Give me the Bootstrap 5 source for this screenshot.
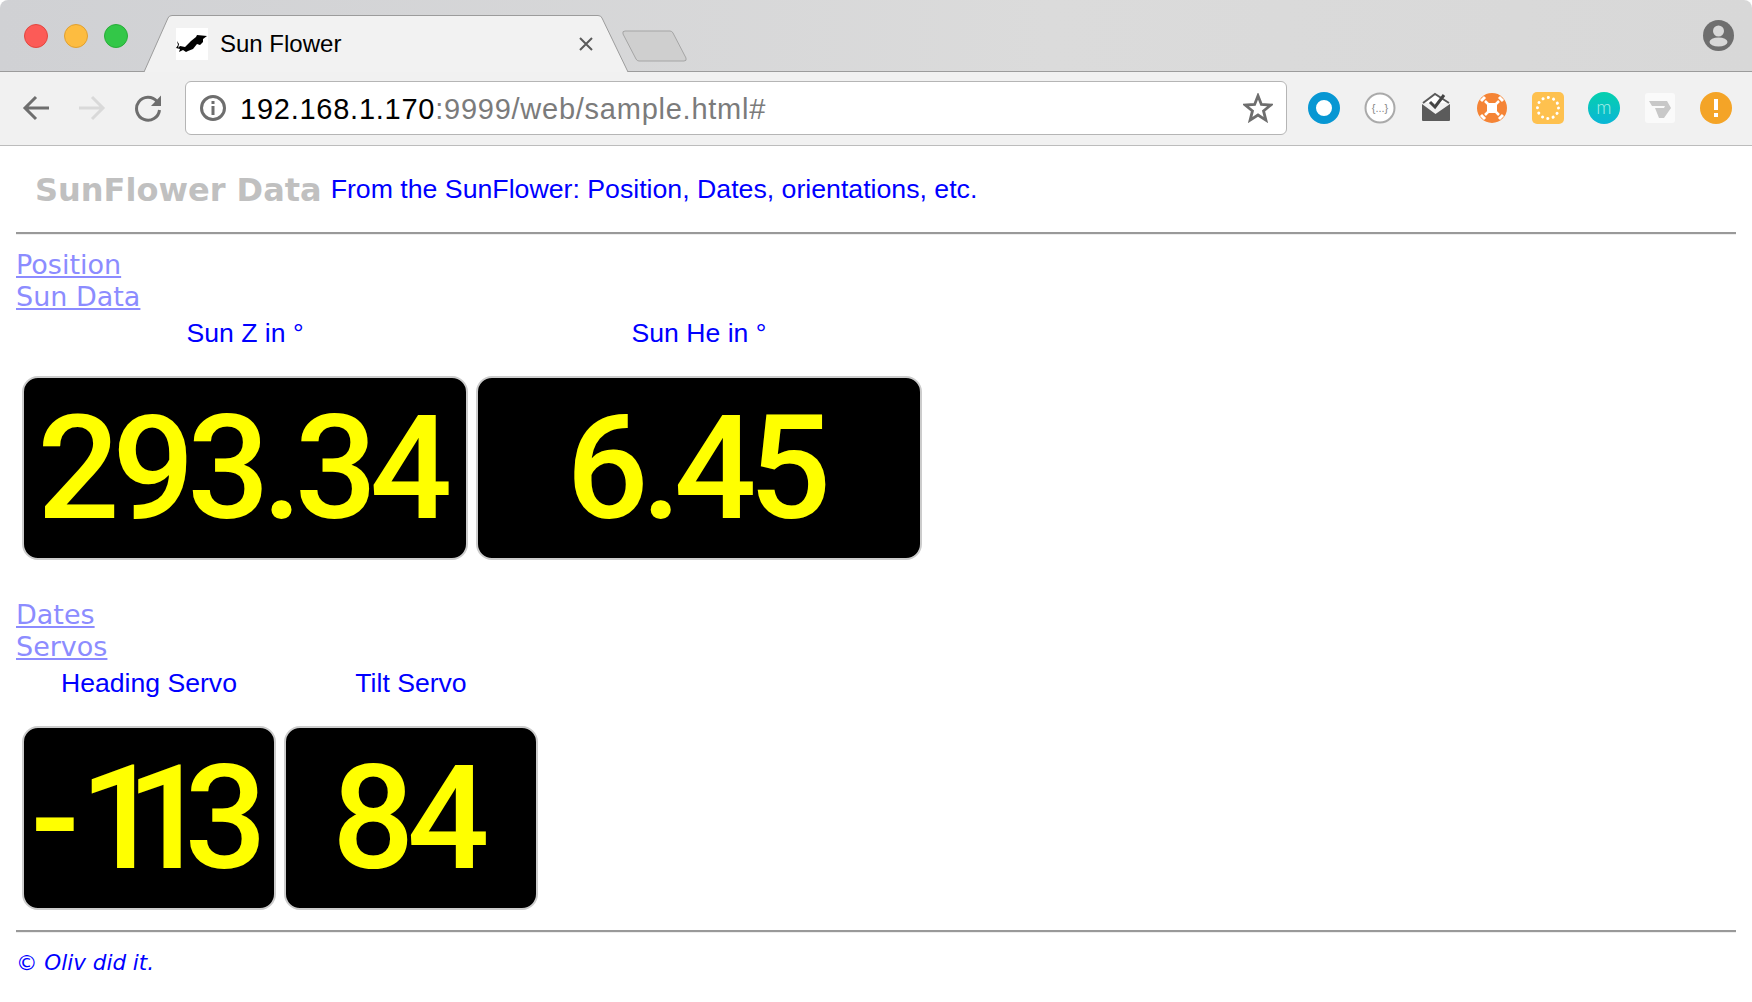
<!DOCTYPE html>
<html>

<head>
  <link href="https://cdn.jsdelivr.net/npm/bootstrap@5.3.2/dist/css/bootstrap.min.css" rel="stylesheet"
    type="text/css" />
  <script src="https://cdn.jsdelivr.net/npm/bootstrap@5.3.2/dist/js/bootstrap.bundle.min.js"></script>

  <style>
    body {
      background-color: #fff;
      font-family: "Liberation Sans", Arial, sans-serif;
      color: #0000ff;
    }

    .tab-strip {
      height: 72px;
      background: linear-gradient(90deg, #d0d1d4, #dbdbdb 60%, #d8d8d8);
      border-bottom: 1px solid #9c9c9c;
      border-radius: 8px 8px 0 0;
    }

    .traffic {
      gap: 16px;
      margin: 24px 0 0 24px;
    }

    .traffic-dot {
      width: 24px;
      height: 24px;
      border-radius: 50%;
    }

    .tab-item {
      width: 484px;
      height: 57px;
      margin: 0 0 -1px 16px;
      padding: 0 35px 0 32px;
      z-index: 1;
    }

    .tab-shape {
      position: absolute;
      inset: 0;
    }

    .tab-fav {
      position: relative;
      width: 32px;
      height: 32px;
      background-color: #fff;
    }

    .tab-title {
      position: relative;
      margin-left: 12px;
      font-size: 24px;
      color: #000;
    }

    .tab-close {
      position: relative;
      margin-left: auto;
    }

    .new-tab {
      margin: 0 0 9px -6px;
    }

    .avatar {
      margin: 20px 18px 0 0;
    }

    .tool-bar {
      height: 74px;
      background-color: #f1f1f1;
      border-bottom: 1px solid #bcbcbc;
      padding: 0 20px 2px 8px;
    }

    .nav-ico {
      width: 56px;
    }

    .address {
      width: 1102px;
      height: 54px;
      margin-left: 9px;
      padding: 0 13px 0 14px;
      background-color: #fff;
      border: 1px solid #b5b5b5;
      border-radius: 6px;
      font-size: 29px;
      letter-spacing: 0.75px;
      color: #7b7b7b;
    }

    .address b {
      font-weight: 400;
      color: #000;
    }

    .url-text {
      margin-left: 14px;
      padding-top: 4px;
    }

    .star-ico {
      margin-left: auto;
    }

    .ext-icons {
      gap: 24px;
      margin-left: 21px;
    }

    .page-body {
      padding: 0 16px;
    }

    .page-head {
      height: 44px;
      margin-top: 22px;
      padding-left: 19px;
      gap: 9px;
    }

    .page-title {
      font-family: "DejaVu Sans", Verdana, sans-serif;
      font-weight: 700;
      font-size: 32px;
      color: #c0c0c0;
    }

    .page-tag {
      font-size: 26.7px;
      color: #0000ff;
      padding-bottom: 2px;
    }

    .rule-line {
      margin: 20px 0 14px;
      height: 3px;
      border-top: 2px solid #999;
      border-bottom: 1px solid #eee;
    }

    .rule-foot {
      margin: 20px 0 16px;
    }

    .sec-link {
      display: block;
      width: fit-content;
      font-family: "DejaVu Sans", Verdana, sans-serif;
      font-size: 27px;
      line-height: 32px;
      color: #8c8cff;
    }

    .sec-link:hover {
      color: #8c8cff;
    }

    .gauge-row {
      gap: 8px;
      padding: 4px 0 0 6px;
    }

    .gauge-row + .sec-link {
      margin-top: 39px;
    }

    .gauge-wide {
      width: 446px;
    }

    .gauge-slim {
      width: 254px;
    }

    .gauge-label {
      font-size: 26.6px;
      line-height: 32px;
      margin-bottom: 27px;
      text-align: center;
    }

    .gauge-face {
      height: 184px;
      padding-right: 8px;
      background-color: #000;
      border: 2px solid #ccc;
      border-radius: 16px;
      color: #ffff00;
      font-family: Roboto, "Liberation Sans", sans-serif;
      font-weight: 500;
      font-size: 145px;
      line-height: 1;
      letter-spacing: -7.5px;
    }

    .digit-dash {
      letter-spacing: 0;
    }

    .digit-ones {
      letter-spacing: -36px;
      margin-right: 12px;
    }

    .foot-note {
      font-family: "DejaVu Sans", Verdana, sans-serif;
      font-style: italic;
      font-size: 21.5px;
      line-height: 28px;
    }
  </style>
</head>

<body>
  <header>
    <div class="tab-strip d-flex align-items-end">
      <div class="traffic d-flex align-self-start">
        <div class="traffic-dot" style="background:#fc5b57;border:1px solid #e2463f"></div>
        <div class="traffic-dot" style="background:#fdbc40;border:1px solid #e0a030"></div>
        <div class="traffic-dot" style="background:#33c748;border:1px solid #28ad38"></div>
      </div>

      <div class="tab-item position-relative d-flex align-items-center">
        <svg class="tab-shape" width="484" height="57" viewBox="0 0 484 57">
          <path d="M0 57 L24 3 Q25 0.5 28 0.5 H454 Q457 0.5 458 3 L484 57" fill="#f2f2f2" stroke="#9c9c9c" />
        </svg>
        <div class="tab-fav">
          <svg width="32" height="32" viewBox="0 0 32 32">
            <path d="M1 13 L3 16 L2 20 L4 18 L9 19 L15 13 L20 9 L21 7 L31 8 L27 11 L27 14 L24 17 L21 16 L17 21 L12 23 L10 24 L7 22 L3 24 L4 21 L0 20 L2 17 Z" fill="#000" />
          </svg>
        </div>
        <span class="tab-title">Sun Flower</span>
        <svg class="tab-close" width="14" height="14" viewBox="0 0 14 14">
          <path d="M1 1 L13 13 M13 1 L1 13" stroke="#5a5a5a" stroke-width="2" />
        </svg>
      </div>

      <svg class="new-tab" width="66" height="32" viewBox="0 0 66 32">
        <path d="M3 1 H48 Q50 1 51 3 L64 28 Q65 31 62 31 H17 Q15 31 14 29 L1 4 Q0 1 3 1 Z" fill="#cfcfcf" stroke="#a5a5a5" />
      </svg>

      <svg class="avatar ms-auto align-self-start" width="31" height="31" viewBox="0 0 31 31">
        <circle cx="15.5" cy="15.5" r="15.5" fill="#6e6e6e" />
        <circle cx="15.5" cy="11" r="5.5" fill="#d8d8d8" />
        <ellipse cx="15.5" cy="22" rx="9" ry="4.5" fill="#d8d8d8" />
      </svg>
    </div>

    <div class="tool-bar d-flex align-items-center">
      <div class="nav-ico d-flex justify-content-center">
        <svg width="28" height="28" viewBox="0 0 28 28">
          <path d="M27 14 H3 M14 3 L3 14 L14 25" fill="none" stroke="#6e6e6e" stroke-width="3" />
        </svg>
      </div>
      <div class="nav-ico d-flex justify-content-center">
        <svg width="28" height="28" viewBox="0 0 28 28">
          <path d="M1 14 H25 M14 3 L25 14 L14 25" fill="none" stroke="#d9d9d9" stroke-width="3" />
        </svg>
      </div>
      <div class="nav-ico d-flex justify-content-center">
        <svg width="28" height="28" viewBox="0 0 28 28">
          <path d="M23 7.5 A11.5 11.5 0 1 0 25.5 16" fill="none" stroke="#6e6e6e" stroke-width="3" />
          <path d="M27 1.5 V12 H17 Z" fill="#6e6e6e" />
        </svg>
      </div>

      <div class="address d-flex align-items-center">
        <svg width="26" height="26" viewBox="0 0 26 26">
          <circle cx="13" cy="13" r="11.5" fill="none" stroke="#6e6e6e" stroke-width="3" />
          <rect x="11.5" y="6" width="3" height="3" fill="#6e6e6e" />
          <rect x="11.5" y="11" width="3" height="9" fill="#6e6e6e" />
        </svg>
        <span class="url-text"><b>192.168.1.170</b>:9999/web/sample.html#</span>
        <svg class="star-ico" width="30" height="30" viewBox="0 0 32 32">
          <path d="M16 3 L19.6 12.2 L29.6 12.8 L21.9 19.1 L24.4 28.9 L16 23.5 L7.6 28.9 L10.1 19.1 L2.4 12.8 L12.4 12.2 Z" fill="none" stroke="#6e6e6e" stroke-width="3" />
        </svg>
      </div>

      <div class="ext-icons d-flex">
        <svg width="32" height="32" viewBox="0 0 32 32">
          <circle cx="16" cy="16" r="12" fill="#fff" stroke="#0797d3" stroke-width="8" />
        </svg>
        <svg width="32" height="32" viewBox="0 0 32 32">
          <circle cx="16" cy="16" r="14.5" fill="#fff" stroke="#aaa" stroke-width="2" />
          <text x="16" y="20" text-anchor="middle" font-family="Liberation Sans" font-size="11" fill="#888">{...}</text>
        </svg>
        <svg width="32" height="32" viewBox="0 0 32 32">
          <path d="M3 11 L15 2 L29 11" fill="#fff" stroke="#5b5b5b" stroke-width="2" />
          <path d="M2 12 L15.5 22 L30 12 V28 Q30 29 29 29 H3 Q2 29 2 28 Z" fill="#5b5b5b" />
          <path d="M10 10 L15 15 L24 3" fill="none" stroke="#444" stroke-width="3" />
        </svg>
        <svg width="32" height="32" viewBox="0 0 32 32">
          <circle cx="16" cy="16" r="15" fill="#f58435" />
          <path d="M9 9 L23 23 M23 9 L9 23" stroke="#fff" stroke-width="2.5" />
          <path d="M5 9 L9 5 M23 5 L27 9 M5 23 L9 27 M23 27 L27 23" stroke="#fff" stroke-width="3" />
          <rect x="11" y="11" width="10" height="10" rx="2" fill="#fff" />
        </svg>
        <svg width="32" height="32" viewBox="0 0 32 32">
          <rect width="32" height="32" rx="5" fill="#fec14f" />
          <circle cx="16" cy="16" r="10.5" fill="none" stroke="#fff" stroke-width="3" stroke-linecap="round" stroke-dasharray="0.1 5.4" />
        </svg>
        <svg width="32" height="32" viewBox="0 0 32 32">
          <defs>
            <linearGradient id="mintFill" x1="0" y1="0" x2="0" y2="1">
              <stop offset="0" stop-color="#05d0ae" />
              <stop offset="1" stop-color="#0bb6d6" />
            </linearGradient>
          </defs>
          <circle cx="16" cy="16" r="16" fill="url(#mintFill)" />
          <text x="16" y="22" text-anchor="middle" font-family="Lato" font-weight="300" font-size="19" fill="#a8eee8">m</text>
        </svg>
        <svg width="32" height="32" viewBox="0 0 32 32">
          <rect x="1" y="1" width="30" height="30" rx="3" fill="#fafafa" />
          <path d="M5 9 H23 L27 16 L20 26 H15 L11 16 H20 L21 14 H8 Z" fill="#c8c8c8" />
        </svg>
        <svg width="32" height="32" viewBox="0 0 32 32">
          <circle cx="16" cy="16" r="16" fill="#f4a427" />
          <rect x="14" y="7" width="4" height="11" fill="#fff" />
          <rect x="14" y="21" width="4" height="4" fill="#fff" />
        </svg>
      </div>
    </div>
  </header>

  <main class="page-body">
    <div class="page-head d-flex align-items-center">
      <span class="page-title">SunFlower Data</span>
      <span class="page-tag">From the SunFlower: Position, Dates, orientations, etc.</span>
    </div>
    <div class="rule-line"></div>

    <a class="sec-link" href="#">Position</a>
    <a class="sec-link" href="#">Sun Data</a>
    <div class="gauge-row d-flex">
      <div class="gauge-wide">
        <div class="gauge-label">Sun Z in °</div>
        <div class="gauge-face d-flex align-items-center justify-content-center">293.34</div>
      </div>
      <div class="gauge-wide">
        <div class="gauge-label">Sun He in °</div>
        <div class="gauge-face d-flex align-items-center justify-content-center">6.45</div>
      </div>
    </div>

    <a class="sec-link" href="#">Dates</a>
    <a class="sec-link" href="#">Servos</a>
    <div class="gauge-row d-flex">
      <div class="gauge-slim">
        <div class="gauge-label">Heading Servo</div>
        <div class="gauge-face d-flex align-items-center justify-content-center"><span class="digit-dash">-</span><span class="digit-ones">11</span><span>3</span></div>
      </div>
      <div class="gauge-slim">
        <div class="gauge-label">Tilt Servo</div>
        <div class="gauge-face d-flex align-items-center justify-content-center">84</div>
      </div>
    </div>

    <div class="rule-line rule-foot"></div>
    <div class="foot-note">© Oliv did it.</div>
  </main>
</body>

</html>
